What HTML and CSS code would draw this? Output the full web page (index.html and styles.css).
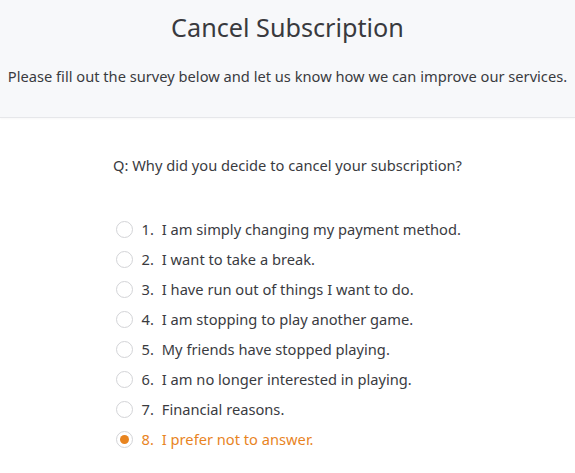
FILE: index.html
```html
<!DOCTYPE html>
<html>
<head>
<meta charset="utf-8">
<link rel="stylesheet" href="styles.css">
</head>
<body>
<header class="header">
  <h1 class="title">Cancel Subscription</h1>
  <p class="subtitle">Please fill out the survey below and let us know how we can improve our services.</p>
</header>
<main class="survey">
  <p class="question">Q: Why did you decide to cancel your subscription?</p>
  <ul class="options">
    <li class="option"><span class="radio"></span><span class="num">1.</span>I am simply changing my payment method.</li>
    <li class="option"><span class="radio"></span><span class="num">2.</span>I want to take a break.</li>
    <li class="option"><span class="radio"></span><span class="num">3.</span>I have run out of things I want to do.</li>
    <li class="option"><span class="radio"></span><span class="num">4.</span>I am stopping to play another game.</li>
    <li class="option"><span class="radio"></span><span class="num">5.</span>My friends have stopped playing.</li>
    <li class="option"><span class="radio"></span><span class="num">6.</span>I am no longer interested in playing.</li>
    <li class="option"><span class="radio"></span><span class="num">7.</span>Financial reasons.</li>
    <li class="option selected"><span class="radio"></span><span class="num">8.</span>I prefer not to answer.</li>
  </ul>
</main>
</body>
</html>
```
FILE: styles.css
```css
* { box-sizing: border-box; }
html, body { margin: 0; padding: 0; background: #fff; }
body {
  font-family: "Noto Sans", "Open Sans", sans-serif;
  color: #3a3b3f;
  font-size: 14.67px;
}
.header {
  background: #f7f8fa;
  border-bottom: 1px solid #e6e7ea;
  box-shadow: 0 1px 2px rgba(0,0,0,0.03);
  padding: 9px 0 31px;
}
.title {
  margin: 0;
  font-size: 25.2px;
  font-weight: 400;
  line-height: 36px;
  color: #393a3e;
  text-align: center;
}
.subtitle {
  margin: 21px 0 0;
  line-height: 20px;
  text-align: center;
  white-space: nowrap;
}
.survey {
  width: 350px;
  margin: 0 auto;
  padding-top: 37px;
}
.question {
  margin: 0 -20px 39px;
  line-height: 20px;
  text-align: center;
}
.options {
  list-style: none;
  margin: 0;
  padding: 0 0 0 3px;
}
.option {
  display: flex;
  align-items: center;
  height: 30px;
  line-height: 20px;
  white-space: nowrap;
}
.radio {
  width: 17px;
  height: 17px;
  border: 1px solid #d3d4d7;
  border-radius: 50%;
  margin-right: 9px;
  flex: none;
  display: flex;
  align-items: center;
  justify-content: center;
  background: #fff;
}
.num { margin-right: 8px; }
.selected { color: #e8841f; }
.selected .radio::after {
  content: "";
  width: 9px;
  height: 9px;
  border-radius: 50%;
  background: #e8841f;
}
```
